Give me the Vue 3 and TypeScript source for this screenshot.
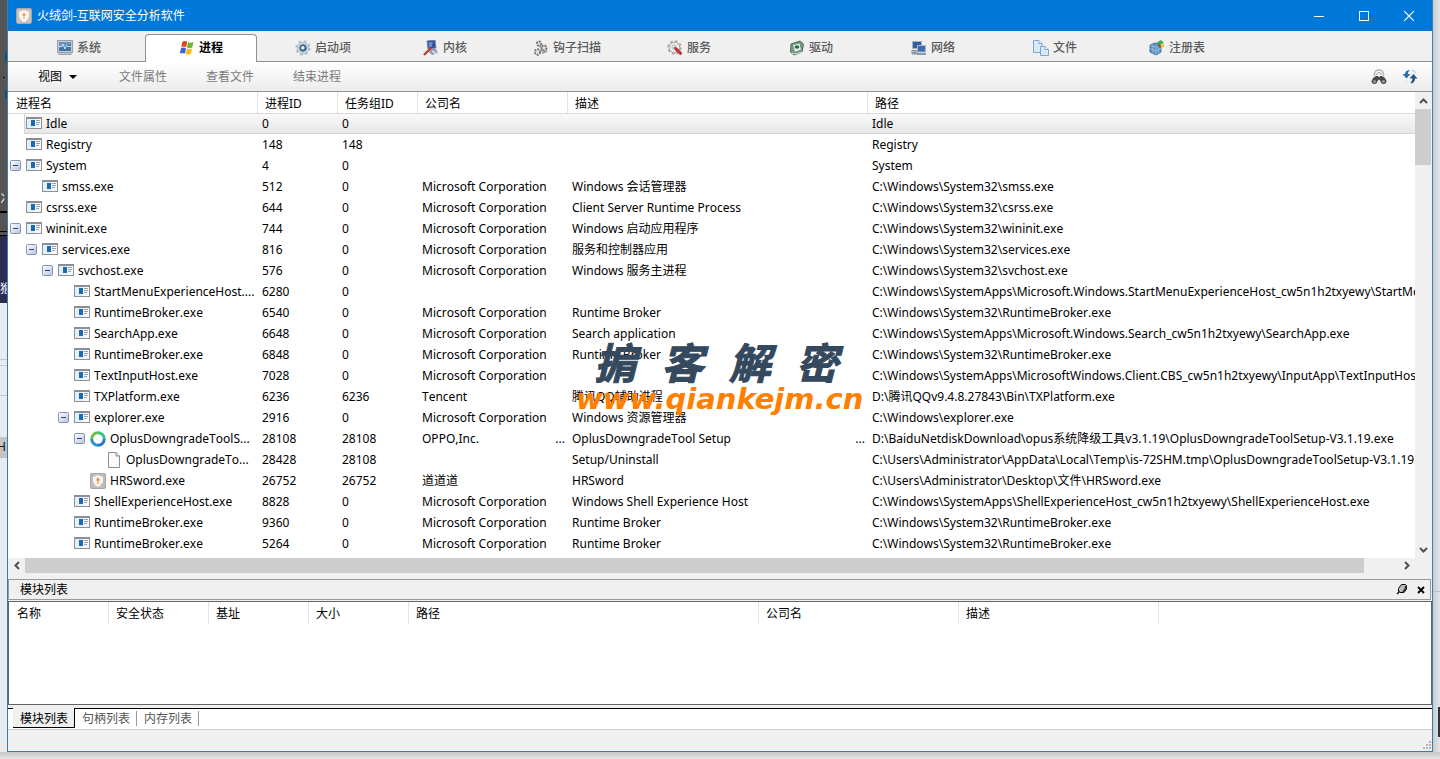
<script setup lang="ts">
import { ref, computed } from 'vue'

type IconKind = 'exe' | 'ring' | 'page' | 'sword'

interface Proc {
  level: number
  name: string
  pid: string
  group: string
  company?: string
  desc?: string
  path: string
  icon?: IconKind
  parent?: boolean
  more?: boolean
}

const tabs = [
  { id: 'system', label: '系统' },
  { id: 'process', label: '进程' },
  { id: 'startup', label: '启动项' },
  { id: 'kernel', label: '内核' },
  { id: 'hook', label: '钩子扫描' },
  { id: 'service', label: '服务' },
  { id: 'driver', label: '驱动' },
  { id: 'network', label: '网络' },
  { id: 'file', label: '文件' },
  { id: 'registry', label: '注册表' },
]
const activeTab = ref('process')

const ms = 'Microsoft Corporation'
const sys = 'C:\\Windows\\System32\\'
const apps = 'C:\\Windows\\SystemApps\\'

const procs: Proc[] = [
  { level: 0, name: 'Idle', pid: '0', group: '0', path: 'Idle' },
  { level: 0, name: 'Registry', pid: '148', group: '148', path: 'Registry' },
  { level: 0, name: 'System', pid: '4', group: '0', path: 'System', parent: true },
  { level: 1, name: 'smss.exe', pid: '512', group: '0', company: ms, desc: 'Windows 会话管理器', path: sys + 'smss.exe' },
  { level: 0, name: 'csrss.exe', pid: '644', group: '0', company: ms, desc: 'Client Server Runtime Process', path: sys + 'csrss.exe' },
  { level: 0, name: 'wininit.exe', pid: '744', group: '0', company: ms, desc: 'Windows 启动应用程序', path: sys + 'wininit.exe', parent: true },
  { level: 1, name: 'services.exe', pid: '816', group: '0', company: ms, desc: '服务和控制器应用', path: sys + 'services.exe', parent: true },
  { level: 2, name: 'svchost.exe', pid: '576', group: '0', company: ms, desc: 'Windows 服务主进程', path: sys + 'svchost.exe', parent: true },
  { level: 3, name: 'StartMenuExperienceHost....', pid: '6280', group: '0', path: apps + 'Microsoft.Windows.StartMenuExperienceHost_cw5n1h2txyewy\\StartMenuExperienceHost.exe' },
  { level: 3, name: 'RuntimeBroker.exe', pid: '6540', group: '0', company: ms, desc: 'Runtime Broker', path: sys + 'RuntimeBroker.exe' },
  { level: 3, name: 'SearchApp.exe', pid: '6648', group: '0', company: ms, desc: 'Search application', path: apps + 'Microsoft.Windows.Search_cw5n1h2txyewy\\SearchApp.exe' },
  { level: 3, name: 'RuntimeBroker.exe', pid: '6848', group: '0', company: ms, desc: 'Runtime Broker', path: sys + 'RuntimeBroker.exe' },
  { level: 3, name: 'TextInputHost.exe', pid: '7028', group: '0', company: ms, path: apps + 'MicrosoftWindows.Client.CBS_cw5n1h2txyewy\\InputApp\\TextInputHost.exe' },
  { level: 3, name: 'TXPlatform.exe', pid: '6236', group: '6236', company: 'Tencent', desc: '腾讯QQ辅助进程', path: 'D:\\腾讯QQv9.4.8.27843\\Bin\\TXPlatform.exe' },
  { level: 3, name: 'explorer.exe', pid: '2916', group: '0', company: ms, desc: 'Windows 资源管理器', path: 'C:\\Windows\\explorer.exe', parent: true },
  { level: 4, name: 'OplusDowngradeToolS...', pid: '28108', group: '28108', company: 'OPPO,Inc.', desc: 'OplusDowngradeTool Setup', path: 'D:\\BaiduNetdiskDownload\\opus系统降级工具v3.1.19\\OplusDowngradeToolSetup-V3.1.19.exe', parent: true, icon: 'ring', more: true },
  { level: 5, name: 'OplusDowngradeTo...', pid: '28428', group: '28108', desc: 'Setup/Uninstall', path: 'C:\\Users\\Administrator\\AppData\\Local\\Temp\\is-72SHM.tmp\\OplusDowngradeToolSetup-V3.1.19.tmp', icon: 'page' },
  { level: 4, name: 'HRSword.exe', pid: '26752', group: '26752', company: '道道道', desc: 'HRSword', path: 'C:\\Users\\Administrator\\Desktop\\文件\\HRSword.exe', icon: 'sword' },
  { level: 3, name: 'ShellExperienceHost.exe', pid: '8828', group: '0', company: ms, desc: 'Windows Shell Experience Host', path: apps + 'ShellExperienceHost_cw5n1h2txyewy\\ShellExperienceHost.exe' },
  { level: 3, name: 'RuntimeBroker.exe', pid: '9360', group: '0', company: ms, desc: 'Runtime Broker', path: sys + 'RuntimeBroker.exe' },
  { level: 3, name: 'RuntimeBroker.exe', pid: '5264', group: '0', company: ms, desc: 'Runtime Broker', path: sys + 'RuntimeBroker.exe' },
]

const selected = ref(0)
const closed = ref<number[]>([])

function toggle(i: number) {
  closed.value = closed.value.includes(i) ? closed.value.filter((n) => n !== i) : [...closed.value, i]
}

const rows = computed(() => {
  const out: { p: Proc; i: number }[] = []
  let hideBelow = Infinity
  procs.forEach((p, i) => {
    if (p.level > hideBelow) return
    hideBelow = closed.value.includes(i) ? p.level : Infinity
    out.push({ p, i })
  })
  return out
})

const lowerTabs = ['模块列表', '句柄列表', '内存列表']
const activeLower = ref('模块列表')
const mark = ['掮', '客', '解', '密']
</script>

<template>
  <div class="desktop">
    <div class="edge edge-left" aria-hidden="true">
      <span class="frag frag-a">冫</span>
      <span class="frag frag-b">猴</span>
      <span class="frag frag-c">H</span>
    </div>

    <main class="window">
      <header class="titlebar">
        <svg class="ico" viewBox="0 0 16 16">
          <rect width="16" height="16" rx="2" fill="#a9a6a8" />
          <rect x="1" y="1" width="14" height="14" rx="2" fill="#c9c4c4" />
          <path d="M8 2L13 4V8Q12 12 8 14Q4 12 3 8V4Z" fill="#fbf6f2" />
          <path d="M8 4.500L10 7L8.500 8V11H7.500V8L6 7Z" fill="#e8a15a" />
        </svg>
        <h1>火绒剑-互联网安全分析软件</h1>
        <div class="winbtns">
          <button type="button" aria-label="最小化"><svg width="10" height="10" viewBox="0 0 10 10"><path d="M0 5.500H10" stroke="#fff" /></svg></button>
          <button type="button" aria-label="最大化"><svg width="10" height="10" viewBox="0 0 10 10"><rect x=".5" y=".5" width="9" height="9" fill="none" stroke="#fff" /></svg></button>
          <button type="button" aria-label="关闭"><svg width="10" height="10" viewBox="0 0 10 10"><path d="M0 0L10 10M10 0L0 10" stroke="#fff" stroke-width="1.200" /></svg></button>
        </div>
      </header>

      <nav class="tabs">
        <button v-for="t in tabs" :key="t.id" type="button" class="tab" :class="{ on: activeTab === t.id }" @click="activeTab = t.id">
          <svg class="ico" viewBox="0 0 16 16">
            <g v-if="t.id === 'system'">
              <rect x=".5" y=".5" width="15" height="12" fill="#c3cad3" stroke="#959fac" />
              <rect x="2" y="2" width="12" height="9" fill="#4673a3" />
              <path d="M2 2H14V4L2 8Z" fill="#6b93bd" />
              <path d="M2 6.500H5L6 4L8 9L9.500 5L10.500 6.500H14" fill="none" stroke="#c4e2f5" />
              <path d="M1 13H15V15H1Z" fill="#c3c9d1" />
              <path d="M2 14.500H14" stroke="#98a2af" />
            </g>
            <g v-else-if="t.id === 'process'">
              <path d="M3.500 1.500Q6 .3 8.200 1.600L7.200 7.200Q4.800 6 2.200 7.200Z" fill="#dd4a22" />
              <path d="M9 2Q11.500 3.300 14.500 2.100L13.300 7.600Q10.500 8.800 8 7.500Z" fill="#74b62c" />
              <path d="M2 8.200Q4.600 7 7 8.200L6 13.500Q3.500 12.400 .8 13.600Z" fill="#3f62d4" />
              <path d="M7.900 8.500Q10.300 9.800 13.100 8.600L11.900 14Q9.300 15.200 6.800 14Z" fill="#f6bd16" />
            </g>
            <g v-else-if="t.id === 'startup'">
              <circle cx="8" cy="8" r="6.500" fill="none" stroke="#b9c2ce" stroke-width="2.500" stroke-dasharray="2.600 2.500" />
              <circle cx="8" cy="8" r="5.500" fill="#d3dae3" stroke="#adb8c6" />
              <circle cx="8" cy="8" r="3.200" fill="#4777a8" stroke="#37536f" />
              <circle cx="7.800" cy="7.800" r="1.700" fill="#edf5fb" />
            </g>
            <g v-else-if="t.id === 'kernel'">
              <path d="M4 1L12 0L13 8L5 9Z" fill="#2e4f94" stroke="#7487ad" />
              <path d="M5.500 2.500L10 2L8.500 7L6 7.500Z" fill="#6e92cf" />
              <path d="M8 9L13 9L15 13L9 15L6 12Z" fill="#8e9bb5" />
              <path d="M1 15L8 8" stroke="#c83832" stroke-width="2.400" />
              <path d="M9 11L14 14" stroke="#d7deec" stroke-width="1.500" />
            </g>
            <g v-else-if="t.id === 'hook'" fill="#e3e3e3" stroke="#777">
              <circle cx="6" cy="3.500" r="2.200" stroke-width="1.800" stroke-dasharray="2 1" />
              <circle cx="11" cy="8" r="2.500" stroke-width="2" stroke-dasharray="2 1" />
              <circle cx="4.500" cy="12" r="2.700" stroke-width="2" stroke-dasharray="2 1" />
              <path d="M6 6L9 8M7 11L10 10M9 13L14 11" stroke="#8c8c8c" stroke-width="1.500" />
            </g>
            <g v-else-if="t.id === 'service'">
              <circle cx="7.500" cy="7.500" r="6.200" fill="none" stroke="#b0a8a8" stroke-width="2.200" stroke-dasharray="2.600 2.200" />
              <circle cx="7.500" cy="7.500" r="5.300" fill="#ececec" stroke="#a5a0a0" />
              <circle cx="7" cy="7" r="2" fill="#fff" stroke="#aaa" />
              <path d="M7 7L10 8L15 13L13.500 15L8.500 10.500Z" fill="#cc3434" stroke="#913030" stroke-width=".6" />
            </g>
            <g v-else-if="t.id === 'driver'">
              <path d="M2 4L11 1L14.500 4L13 12L5 15L1.500 12Z" fill="#829b8e" stroke="#4e685c" />
              <path d="M3.500 4.500L11 3L12.500 10L5.500 12.500Z" fill="#e6f0e9" stroke="#5e8f71" />
              <ellipse cx="8" cy="7" rx="2.300" ry="1.700" fill="#25664a" />
              <path d="M3 13L6 14L13 12" stroke="#d9e5dd" fill="none" />
            </g>
            <g v-else-if="t.id === 'network'">
              <rect x="1.500" y="1.500" width="9" height="7" fill="#315e9e" stroke="#a6b1c3" />
              <path d="M1 10.500H6V14H1Z" fill="#d4dae4" stroke="#7c8ca4" />
              <rect x="6.500" y="5.500" width="8" height="6.500" fill="#3d6db0" stroke="#aab5c6" />
              <path d="M6 14H15M2 12.500H5" stroke="#687c99" stroke-width="1.500" />
            </g>
            <g v-else-if="t.id === 'file'" fill="#d8eafa" stroke="#7ba6cd">
              <path d="M.5 .5H6L9 3.500V12.500H.5Z" />
              <path d="M6 .5V3.500H9" fill="#fff" />
              <path d="M7.500 6.500H12L15.500 9.500V15.500H7.500Z" />
              <path d="M12 6.500V9.500H15.500" fill="#fff" />
            </g>
            <g v-else>
              <path d="M1 5L6 3L12 5V12L7 15L1 12Z" fill="#5d91c2" stroke="#47759f" />
              <path d="M1 5L7 7L12 5M7 7V15M4 6V13.500M1 8.500L7 11L12 8.500M9.500 6V13" fill="none" stroke="#9cc4e2" stroke-width=".8" />
              <path d="M7 3L12 0L15 3L10 5Z" fill="#3daf4e" />
              <path d="M11 5L15 4V7L12 8Z" fill="#e8c32f" />
              <path d="M9 5L11 4L12 7L10 8Z" fill="#8a4a44" />
            </g>
          </svg>
          <span>{{ t.label }}</span>
        </button>
      </nav>

      <div class="toolbar">
        <button type="button" class="tool view">视图 <svg width="8" height="4" viewBox="0 0 8 4"><path d="M0 0H8L4 4Z" fill="#000" /></svg></button>
        <button type="button" class="tool" disabled>文件属性</button>
        <button type="button" class="tool" disabled>查看文件</button>
        <button type="button" class="tool" disabled>结束进程</button>
        <div class="tool-icons">
          <button type="button" aria-label="查找">
            <svg class="ico" viewBox="0 0 16 16">
              <path d="M3.500 7V5Q4 1 8 1Q12 1 12.500 5V7" fill="none" stroke="#b4b4b4" stroke-width="1.400" />
              <path d="M5.500 6Q6 3.500 8 3.500Q10 3.500 10.500 6" fill="none" stroke="#9c9c9c" />
              <path d="M5 7H7L8 8.500L9 7H11L14 9L15.500 12Q15.500 15 12.500 15Q10 15 9.500 12L8 10.500L6.500 12Q6 15 3.500 15Q.5 15 .5 12L2 9Z" fill="#484848" />
              <circle cx="3.500" cy="12.500" r="1.400" fill="#9a9a9a" />
              <circle cx="12.500" cy="12.500" r="1.400" fill="#9a9a9a" />
            </svg>
          </button>
          <button type="button" aria-label="刷新">
            <svg class="ico" viewBox="0 0 16 16">
              <path d="M6.500 1Q3 2 3 5H.5L4.500 9.500L8.500 5H6Q5.500 3 7.500 1.500Z" fill="#2f6fab" />
              <path d="M9.500 14.500Q13 13 13 9.500H15.500L11.500 5L7.500 9.500H10.500Q10.500 12 8.500 13.500Z" fill="#27547f" />
              <path d="M10 1Q13 2 13.500 4" fill="none" stroke="#b9d3ea" stroke-width="1.500" />
              <path d="M3 11Q4 13 6 14" fill="none" stroke="#d4e1ed" />
            </svg>
          </button>
        </div>
      </div>

      <section class="listing">
        <div class="viewport">
          <table class="procs">
            <colgroup><col class="c-name" /><col class="c-id" /><col class="c-id" /><col class="c-co" /><col class="c-desc" /><col /></colgroup>
            <thead>
              <tr><th>进程名</th><th>进程ID</th><th>任务组ID</th><th>公司名</th><th>描述</th><th>路径</th></tr>
            </thead>
            <tbody>
              <tr v-for="{ p, i } in rows" :key="i" :class="{ sel: selected === i }" @click="selected = i">
                <td>
                  <div class="node" :style="{ paddingLeft: 2 + p.level * 16 + 'px' }">
                    <span class="slot">
                      <button v-if="p.parent" type="button" class="expander" :aria-label="'展开或折叠 ' + p.name" @click.stop="toggle(i)">
                        <svg width="11" height="11" viewBox="0 0 11 11">
                          <defs><linearGradient id="box" x1="0" y1="0" x2="1" y2="1"><stop offset="0" stop-color="#fff" /><stop offset="1" stop-color="#b9c3de" /></linearGradient></defs>
                          <rect x=".5" y=".5" width="10" height="10" rx="1" fill="url(#box)" stroke="#8492b4" />
                          <path :d="closed.includes(i) ? 'M3 5.500H8M5.500 3V8' : 'M3 5.500H8'" stroke="#26437f" />
                        </svg>
                      </button>
                    </span>
                    <svg class="ico" viewBox="0 0 16 16">
                      <g v-if="!p.icon">
                        <rect x=".5" y="1.500" width="15" height="11" fill="#fff" stroke="#8d9196" />
                        <rect x="0" y="1" width="16" height="2" fill="#8b8f94" />
                        <rect x="1" y="3" width="14" height="9" fill="#e3f0f9" />
                        <rect x="9" y="3" width="6" height="9" fill="#f7fafc" />
                        <rect x="5" y="4" width="4" height="6" fill="#1b6cae" />
                        <path d="M10 4.500H14M10 6.500H14M10 8.500H13" stroke="#9b9ea3" />
                      </g>
                      <g v-else-if="p.icon === 'ring'" fill="none" stroke-width="3">
                        <path d="M8 1.700A6.300 6.300 0 0 0 1.700 8" stroke="#67c246" />
                        <path d="M1.700 8A6.300 6.300 0 0 0 8 14.300" stroke="#2b91c9" />
                        <path d="M8 14.300A6.300 6.300 0 0 0 14.300 8" stroke="#2b79c4" />
                        <path d="M14.300 8A6.300 6.300 0 0 0 8 1.700" stroke="#3dc08b" />
                      </g>
                      <g v-else-if="p.icon === 'page'" fill="#fbfbfb" stroke="#8e8e8e">
                        <path d="M2.500 .5H10L13.500 4V15.500H2.500Z" />
                        <path d="M10 .5V4H13.500" fill="#e2e2e2" />
                      </g>
                      <g v-else>
                        <rect width="16" height="16" rx="2" fill="#a9a6a8" />
                        <rect x="1" y="1" width="14" height="14" rx="2" fill="#c1bcbc" />
                        <path d="M8 2L13 4V8Q12 12 8 14Q4 12 3 8V4Z" fill="#fbf3ee" />
                        <path d="M8 4.500L10 7L8.500 8V11H7.500V8L6 7Z" fill="#e38b3c" />
                      </g>
                    </svg>
                    <span class="pname">{{ p.name }}</span>
                  </div>
                </td>
                <td>{{ p.pid }}</td>
                <td>{{ p.group }}</td>
                <td><div class="split">{{ p.company }}<span v-if="p.more">...</span></div></td>
                <td><div class="split">{{ p.desc }}<span v-if="p.more">...</span></div></td>
                <td>{{ p.path }}</td>
              </tr>
            </tbody>
          </table>
          <div class="watermark" aria-hidden="true">
            <div class="mark"><span v-for="c in mark" :key="c">{{ c }}</span></div>
            <div class="url">www.qiankejm.cn</div>
          </div>
        </div>
        <div class="vbar">
          <button type="button" aria-label="向上滚动"><svg width="9" height="6" viewBox="0 0 9 6"><path d="M1 5L4.500 1.500L8 5" fill="none" stroke="#505050" stroke-width="2" /></svg></button>
          <div class="vthumb"></div>
          <button type="button" class="end" aria-label="向下滚动"><svg width="9" height="6" viewBox="0 0 9 6"><path d="M1 1L4.500 4.500L8 1" fill="none" stroke="#505050" stroke-width="2" /></svg></button>
        </div>
        <div class="hbar">
          <button type="button" aria-label="向左滚动"><svg width="6" height="9" viewBox="0 0 6 9"><path d="M5 1L1.500 4.500L5 8" fill="none" stroke="#505050" stroke-width="2" /></svg></button>
          <div class="htrack"><div class="hthumb"></div></div>
          <button type="button" aria-label="向右滚动"><svg width="6" height="9" viewBox="0 0 6 9"><path d="M1 1L4.500 4.500L1 8" fill="none" stroke="#505050" stroke-width="2" /></svg></button>
        </div>
      </section>

      <section class="modules">
        <header class="mod-title">
          <h2>模块列表</h2>
          <button type="button" aria-label="固定">
            <svg width="11" height="11" viewBox="0 0 11 11">
              <path d="M3.500 3L5.500 .5H9.500L10.500 1.500V5L8 8.500H4L2.500 7V4.500Z" fill="#bbb" stroke="#000" />
              <path d="M7 8L9.500 4.500V2" fill="none" stroke="#333" stroke-width="1.500" />
              <path d="M1 10L3.500 7.500" stroke="#000" stroke-width="1.300" />
            </svg>
          </button>
          <button type="button" aria-label="关闭面板"><svg width="8" height="8" viewBox="0 0 8 8"><path d="M1 1L7 7M7 1L1 7" stroke="#000" stroke-width="1.800" /></svg></button>
        </header>
        <div class="mod-body">
          <table class="mods">
            <colgroup><col class="m-s" /><col class="m-s" /><col class="m-s" /><col class="m-s" /><col class="m-l" /><col class="m-m" /><col class="m-m" /><col /></colgroup>
            <thead>
              <tr><th>名称</th><th>安全状态</th><th>基址</th><th>大小</th><th>路径</th><th>公司名</th><th>描述</th><td></td></tr>
            </thead>
          </table>
        </div>
        <nav class="lower-tabs">
          <button v-for="l in lowerTabs" :key="l" type="button" :class="{ on: activeLower === l }" @click="activeLower = l"><span>{{ l }}</span></button>
          <i class="rest"></i>
        </nav>
      </section>

      <footer class="status">
        <svg width="10" height="10" viewBox="0 0 10 10" fill="#b5b5b5"><path d="M7 0h2v2H7zM4 3h2v2H4zM7 3h2v2H7zM1 6h2v2H1zM4 6h2v2H4zM7 6h2v2H7z" /></svg>
      </footer>
    </main>

    <div class="edge edge-right" aria-hidden="true"></div>
    <div class="edge edge-bottom" aria-hidden="true"></div>
  </div>
</template>

<style>
html,
body {
  margin: 0;
  background: #e4e4e4;
}
</style>

<style scoped>
* {
  box-sizing: border-box;
}
.desktop {
  display: grid;
  grid-template-columns: 7px minmax(0, 1fr) 7px;
  grid-template-rows: 1fr 7px;
  min-height: 100vh;
  font: 12px/16px 'Noto Sans', 'Noto Sans CJK SC', sans-serif;
  font-kerning: none;
  color: #000;
}
button {
  font: inherit;
  color: inherit;
  background: none;
  border: 0;
  padding: 0;
  margin: 0;
}
h1,
h2 {
  font: inherit;
  margin: 0;
}
svg {
  display: block;
}
.ico {
  width: 16px;
  height: 16px;
  flex: none;
}
.edge-left {
  position: relative;
  overflow: hidden;
  background:
    linear-gradient(#000, #000) 0 211px / 100% 2px no-repeat,
    linear-gradient(#000, #000) 0 231px / 100% 1px no-repeat,
    linear-gradient(#000, #000) 0 235px / 100% 1px no-repeat,
    linear-gradient(#111, #111) 3px 77px / 2px 1px no-repeat,
    linear-gradient(#1f4b6d, #1f4b6d) 5px 53px / 2px 8px no-repeat,
    linear-gradient(#1f4b6d, #1f4b6d) 5px 90px / 2px 8px no-repeat,
    linear-gradient(#c9c9c9, #c9c9c9) 0 359px / 100% 1px no-repeat,
    linear-gradient(#c9c9c9, #c9c9c9) 0 365px / 100% 1px no-repeat,
    linear-gradient(#c9c9c9, #c9c9c9) 0 395px / 100% 1px no-repeat,
    linear-gradient(#c4c4c4, #c4c4c4) 0 437px / 100% 21px no-repeat,
    linear-gradient(#545454 236px, #2d2b52 236px, #2d2b52 303px, #e9ebed 303px);
}
.frag {
  position: absolute;
  left: 0;
  color: #fff;
}
.frag-a {
  top: 191px;
}
.frag-b {
  top: 281px;
}
.frag-c {
  top: 439px;
  left: -3px;
  color: #111;
}
.edge-right {
  background:
    linear-gradient(#333, #333) 5px 707px / 2px 30px no-repeat,
    linear-gradient(#bdbdbd, #bdbdbd) 0 591px / 100% 1px no-repeat,
    linear-gradient(90deg, #c9cdd1, #e4e4e4);
}
.edge-bottom {
  grid-column: 1 / -1;
  background: linear-gradient(#c4c6c8, #e6e6e6);
}
.window {
  display: flex;
  flex-direction: column;
  border: 1px solid #2f7fb8;
  border-top: 0;
  background: #f0f0f0;
}
.titlebar {
  display: flex;
  align-items: center;
  height: 31px;
  padding: 0 1px 0 8px;
  gap: 5px;
  background: #0078d7;
  color: #fff;
}
.winbtns {
  display: flex;
  margin-left: auto;
}
.winbtns button {
  display: grid;
  place-items: center;
  width: 45px;
  height: 31px;
}
.tabs {
  display: flex;
  gap: 10px;
  height: 31px;
  padding: 3px 15px 0;
  box-shadow: inset 0 -1px #919191;
}
.tab {
  display: flex;
  align-items: center;
  justify-content: center;
  gap: 4px;
  width: 112px;
  padding-bottom: 1px;
  border: 1px solid transparent;
  border-bottom: 0;
  border-radius: 4px 4px 0 0;
  color: #5a5a5a;
  font-weight: 500;
}
.tab.on {
  background: #fff;
  border-color: #919191;
  color: #000;
  font-weight: 700;
}
.toolbar {
  display: flex;
  align-items: center;
  gap: 39px;
  height: 30px;
  padding: 0 14px 0 30px;
  border-bottom: 1px solid #919191;
  background: linear-gradient(#fff, #ececec);
}
.tool:disabled {
  color: #7b7b7b;
}
.view {
  display: flex;
  align-items: center;
  gap: 7px;
  padding-right: 3px;
}
.tool-icons {
  display: flex;
  gap: 15px;
  margin-left: auto;
}
.listing {
  display: grid;
  grid-template-columns: minmax(0, 1fr) 17px;
  background: #f0f0f0;
  padding-bottom: 6px;
}
.viewport {
  position: relative;
  overflow: hidden;
  background: #fff;
  padding-bottom: 4px;
}
table {
  width: 100%;
  table-layout: fixed;
  border-collapse: separate;
  border-spacing: 0;
}
th {
  font-weight: 400;
  text-align: left;
  padding: 0 0 0 7px;
  border-right: 1px solid #e2e2e2;
}
.procs th {
  height: 21px;
  padding-top: 2px;
}
.procs th:first-child,
.mods th:first-child {
  padding-left: 8px;
}
.procs th:last-child {
  border-right: 0;
}
.c-name {
  width: 250px;
}
.c-id {
  width: 80px;
}
.c-co {
  width: 150px;
}
.c-desc {
  width: 300px;
}
.procs td {
  height: 21px;
  padding: 0 0 0 4px;
  white-space: nowrap;
  overflow: hidden;
}
.procs td:first-child {
  padding: 0;
}
.sel {
  background:
    linear-gradient(#d5d5d5, #d5d5d5) 16px 100% / 100% 1px no-repeat,
    linear-gradient(#d8d8d8, #d8d8d8) 0 0 / 100% 1px no-repeat,
    linear-gradient(#d5d5d5, #d5d5d5) 16px 0 / 1px 100% no-repeat,
    linear-gradient(#fafafa, #e6e6e6) 16px 0 / 100% 100% no-repeat;
}
.node {
  display: flex;
  align-items: center;
}
.slot {
  width: 16px;
  flex: none;
}
.expander {
  display: block;
}
.pname {
  padding-left: 4px;
}
.split {
  display: flex;
  justify-content: space-between;
  padding-right: 3px;
}
.watermark {
  position: absolute;
  left: 568px;
  top: 244px;
  width: 290px;
  pointer-events: none;
}
.mark {
  display: flex;
  justify-content: space-between;
  padding: 0 28px 0 18px;
  font: italic 700 42px/50px 'Noto Sans CJK SC', sans-serif;
  color: #34495e;
  -webkit-text-stroke: 1px #34495e;
}
.url {
  font: italic 700 29px/34px 'DejaVu Sans', sans-serif;
  margin-top: -4px;
  color: #ff7f00;
}
.vbar {
  display: flex;
  flex-direction: column;
}
.vbar button {
  display: grid;
  place-items: center;
  height: 17px;
}
.vbar .end {
  margin-top: auto;
}
.vthumb {
  height: 56px;
  margin-right: 1px;
  background: #cdcdcd;
}
.hbar {
  display: flex;
  height: 15px;
}
.hbar button {
  display: grid;
  place-items: center;
  width: 17px;
}
.htrack {
  flex: 1;
}
.hthumb {
  width: 97.5%;
  height: 100%;
  background: #cdcdcd;
}
.modules {
  flex: 1;
  display: flex;
  flex-direction: column;
}
.mod-title {
  display: flex;
  align-items: center;
  gap: 10px;
  height: 21px;
  margin-right: 1px;
  padding: 0 5px 0 11px;
  border: 1px solid #9a9a9a;
}
.mod-title h2 {
  margin-right: auto;
}
.mod-body {
  flex: 1;
  min-height: 60px;
  margin-top: 1px;
  border: 1px solid #646464;
  background: #fff;
}
.mods th {
  height: 22px;
  padding-top: 2px;
}
.m-s {
  width: 100px;
}
.m-m {
  width: 200px;
}
.m-l {
  width: 350px;
}
.lower-tabs {
  display: flex;
  margin-top: 3px;
  height: 22px;
  padding-bottom: 1px;
  background: #fff;
  border-bottom: 1px solid #d0d0d0;
}
.lower-tabs::before {
  content: '';
  width: 5px;
  border-top: 1px solid #000;
}
.lower-tabs button {
  display: flex;
  border-top: 1px solid #000;
  color: #555;
}
.lower-tabs button span {
  margin: 2px 0;
  padding: 0 6px 0 7px;
  border-right: 1px solid #999;
}
.lower-tabs button.on {
  background: #f0f0f0;
  border: solid #000;
  border-width: 0 1px 1px 0;
  color: #000;
}
.lower-tabs button.on span {
  border-right: 0;
  margin-top: 3px;
}
.rest {
  flex: 1;
  border-top: 1px solid #000;
}
.status {
  display: flex;
  align-items: flex-end;
  justify-content: flex-end;
  height: 21px;
}
</style>
